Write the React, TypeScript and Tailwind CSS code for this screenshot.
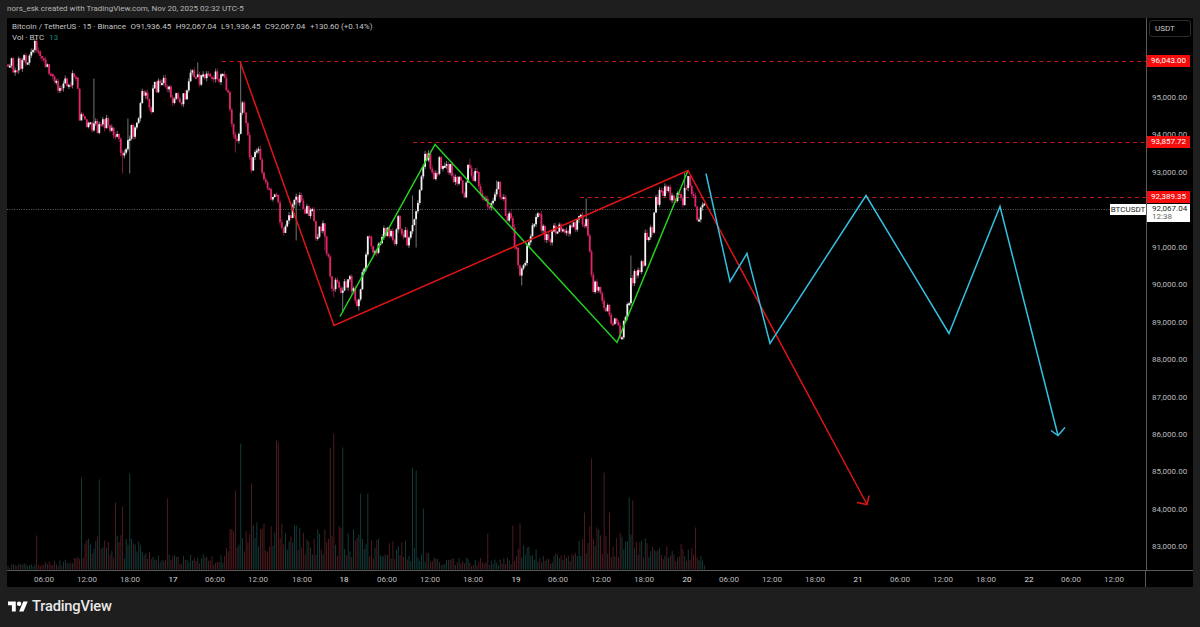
const path: [number, number][] = [
  [7, 64], [15, 66], [22, 62], [30, 58], [36, 42], [45, 58], [50, 77], [63, 87], [70, 78], [78, 83], [80, 120],
  [93, 123], [100, 127], [110, 123], [122, 153], [132, 130], [138, 127], [143, 90], [152, 107], [153, 88],
  [163, 83], [173, 100], [183, 100], [192, 72], [203, 80], [217, 73], [227, 83], [235, 140], [240, 123],
  [242, 93], [252, 167], [257, 147], [263, 180], [277, 200], [282, 233], [293, 210], [298, 198], [305, 213],
  [313, 207], [315, 233], [323, 227], [332, 283], [343, 290], [350, 280], [358, 307], [362, 277], [368, 237],
  [377, 250], [383, 230], [395, 240], [398, 220], [407, 240], [413, 220], [417, 210], [422, 180], [425, 147],
  [433, 173], [440, 163], [447, 163], [457, 180], [465, 190], [467, 167], [477, 177], [483, 200], [490, 203],
  [497, 183], [503, 200], [513, 230], [520, 273], [528, 250], [533, 220], [540, 220], [547, 237], [560, 228],
  [568, 235], [577, 220], [587, 220], [592, 283], [600, 293], [607, 310], [622, 333], [627, 310], [632, 277],
  [637, 267], [643, 267], [645, 237], [652, 230], [655, 203], [663, 190], [670, 193], [677, 195], [683, 202],
  [685, 178], [692, 188], [698, 218], [703, 210],
];

const wicks: [number, number][] = [
  [241, 61], [94, 78], [128, 118], [123, 173], [130, 173], [235, 152], [253, 170], [296, 240], [325, 250],
  [342, 312], [358, 310], [333, 297], [416, 247], [412, 195], [521, 285], [469, 158], [497, 180], [587, 198],
  [631, 255], [685, 172], [700, 222], [37, 36], [197, 62],
];

const volPeaks: [number, number][] = [
  [36, 535], [82, 477], [100, 479], [130, 473], [115, 502], [122, 506], [167, 498], [235, 490], [240, 443],
  [252, 483], [277, 440], [279, 442], [330, 447], [333, 433], [342, 447], [360, 493], [367, 493], [412, 467],
  [417, 470], [423, 508], [487, 533], [512, 525], [520, 523], [592, 458], [604, 472], [585, 512], [630, 497],
  [632, 500], [610, 512], [695, 527],
];

const volEnvelope: [number, number][] = [
  [7, 6], [35, 10], [75, 14], [80, 42], [130, 42], [165, 20], [195, 18], [225, 20], [232, 65], [300, 52],
  [340, 52], [370, 42], [400, 36], [425, 30], [435, 14], [510, 14], [520, 32], [545, 20], [575, 22], [585, 55],
  [640, 42], [660, 28], [690, 32], [704, 12],
];

const priceLabels: [string, number][] = [
  ["95,000.00", 98], ["94,000.00", 135], ["93,000.00", 173], ["91,000.00", 248], ["90,000.00", 285],
  ["89,000.00", 323], ["88,000.00", 360], ["87,000.00", 398], ["86,000.00", 435], ["85,000.00", 472],
  ["84,000.00", 510], ["83,000.00", 547],
];

const redTags: [string, number][] = [["96,043.00", 61], ["93,857.72", 142], ["92,389.35", 197]];

const timeLabels: [string, number, boolean][] = [
  ["06:00", 44, false], ["12:00", 87, false], ["18:00", 130, false], ["17", 173, true], ["06:00", 215, false],
  ["12:00", 258, false], ["18:00", 302, false], ["18", 344, true], ["06:00", 387, false], ["12:00", 430, false],
  ["18:00", 473, false], ["19", 516, true], ["06:00", 558, false], ["12:00", 601, false], ["18:00", 644, false],
  ["20", 687, true], ["06:00", 729, false], ["12:00", 772, false], ["18:00", 815, false], ["21", 858, true],
  ["06:00", 900, false], ["12:00", 943, false], ["18:00", 986, false], ["22", 1029, true], ["06:00", 1071, false],
  ["12:00", 1114, false],
];

function lerp(points: [number, number][], x: number) {
  for (let i = 1; i < points.length; i++) {
    if (x <= points[i][0]) {
      const [x0, y0] = points[i - 1];
      const [x1, y1] = points[i];
      return y0 + ((y1 - y0) * (x - x0)) / (x1 - x0 || 1);
    }
  }
  return points[points.length - 1][1];
}

// small seeded generator so the candles come out the same on each load
let seed = 20251120;
function rnd() {
  seed = (seed * 1664525 + 1013904223) % 4294967296;
  return seed / 4294967296;
}

const STEP = 1.79;
const BASE = 569;

const candles = Array.from({ length: 390 }, (_, i) => 8 + i * STEP).map((x) => ({ x, y: 0, open: 0, high: 0, low: 0 }));
let last = path[0][1];
for (const c of candles) {
  c.open = last;
  c.y = lerp(path, c.x) + (rnd() - 0.5) * 15;
  c.high = Math.min(c.open, c.y) - rnd() * 3.5;
  c.low = Math.max(c.open, c.y) + rnd() * 3.5;
  last = c.y;
}
for (const [x, y] of wicks) {
  const c = candles[Math.round((x - 8) / STEP)];
  if (y < c.high) c.high = y;
  if (y > c.low) c.low = y;
}

const volumes = candles.map((c) => {
  const h = lerp(volEnvelope, c.x) * (0.25 + rnd() * 0.6);
  return { x: c.x, top: BASE - h, up: c.y < c.open };
});
for (const [x, y] of volPeaks) {
  volumes[Math.round((x - 8) / STEP)].top = y;
}

function Chart() {
  return (
    <svg viewBox="7 18 1139 551" className="absolute inset-0 h-full w-full">
      {volumes.map((v) => (
        <rect
          key={v.x}
          x={v.x - 0.4}
          y={v.top}
          width={0.9}
          height={BASE - v.top}
          fill={v.up ? "#15403f" : "#561e22"}
        />
      ))}
      <line x1={7} y1={209} x2={1110} y2={209} stroke="#777" strokeWidth={0.8} strokeDasharray="1 1.4" />
      <line x1={222} y1={61} x2={1146} y2={61} stroke="#c2141d" strokeWidth={1} strokeDasharray="4 3.5" />
      <line x1={413} y1={142} x2={1146} y2={142} stroke="#c2141d" strokeWidth={1} strokeDasharray="4 3.5" />
      <line x1={580} y1={197} x2={1146} y2={197} stroke="#c2141d" strokeWidth={1} strokeDasharray="4 3.5" />
      {candles.map((c) => {
        const up = c.y < c.open;
        const top = Math.min(c.y, c.open);
        const body = Math.max(Math.abs(c.y - c.open), 2);
        return (
          <g key={c.x}>
            <line x1={c.x} y1={c.high} x2={c.x} y2={c.low} stroke={up ? "#a8a8a8" : "#b5245c"} strokeWidth={0.7} />
            <rect x={c.x - 0.9} y={top} width={1.8} height={body} fill={up ? "#f4f4f4" : "#e3246c"} />
          </g>
        );
      })}
      <polyline points="340,316 435,144 617,342 688,170" fill="none" stroke="#22d31f" strokeWidth={1.5} />
      <polyline points="240,61 334,325 688,170 867,504" fill="none" stroke="#e01414" strokeWidth={1.5} />
      <polyline points="857,502 867,504 869,495" fill="none" stroke="#e01414" strokeWidth={1.5} />
      <polyline
        points="706,173 730,281 747,253 770,343 866,195 949,333 1000,206 1058,435"
        fill="none"
        stroke="#35bfe0"
        strokeWidth={1.5}
      />
      <polyline points="1051,430 1058,435 1065,427" fill="none" stroke="#35bfe0" strokeWidth={1.5} />
    </svg>
  );
}

function PriceAxis() {
  return (
    <div className="relative w-[47px] shrink-0 border-l border-[#5a5a5a]">
      <div className="absolute left-[2px] top-[2px] flex h-[17px] w-[42px] items-center rounded-[3px] border border-[#2c2c2c] pl-[5px] text-[8px] text-[#c8c8c8]">
        USDT
      </div>
      {priceLabels.map(([label, y]) => (
        <div key={label} className="absolute left-[5px] -translate-y-1/2 text-[8px] leading-none text-[#bcbcbc]" style={{ top: y - 18 }}>
          {label}
        </div>
      ))}
      {redTags.map(([label, y]) => (
        <div
          key={label}
          className="absolute left-0 flex h-[12px] w-[43px] -translate-y-1/2 items-center justify-center bg-[#f50d0d] text-[8px] leading-none text-white"
          style={{ top: y - 18 }}
        >
          {label}
        </div>
      ))}
      <div className="absolute left-0 top-[186px] h-[18px] w-[43px] bg-white pl-[5px] pt-[1px] text-[8px] leading-[8px] text-[#222]">
        <div>92,067.04</div>
        <div className="text-[#666]">12:38</div>
      </div>
    </div>
  );
}

function TimeAxis() {
  return (
    <div className="relative h-[17px] shrink-0 border-t border-[#5a5a5a]">
      {timeLabels.map(([label, x, day], i) => (
        <span
          key={i}
          className={`absolute top-[4px] -translate-x-1/2 text-[8px] leading-[9px] ${day ? "text-[#e0e0e0]" : "text-[#bcbcbc]"}`}
          style={{ left: x - 7 }}
        >
          {label}
        </span>
      ))}
      <div className="absolute bottom-0 right-[47px] top-0 border-r border-[#5a5a5a]" />
    </div>
  );
}

export default function App() {
  return (
    <div className="flex h-[627px] w-[1200px] flex-col overflow-hidden bg-[#1e1e1e] font-['Roboto',sans-serif]">
      <div className="flex h-[18px] shrink-0 items-center pl-[7px] text-[8px] text-[#b4b4b4]">
        nors_esk created with TradingView.com, Nov 20, 2025 02:32 UTC-5
      </div>

      <div className="mx-[7px] flex h-[569px] shrink-0 flex-col bg-black">
        <div className="flex min-h-0 flex-1">
          <div className="relative flex-1">
            <Chart />
            <div className="absolute left-[5px] top-[4px] flex gap-[4.5px] whitespace-nowrap text-[8px] leading-[10px] text-[#c4c4c4]">
              <span>Bitcoin / TetherUS · 15 · Binance</span>
              <span>O91,936.45</span>
              <span>H92,067.04</span>
              <span>L91,936.45</span>
              <span>C92,067.04</span>
              <span>+130.60 (+0.14%)</span>
            </div>
            <div className="absolute left-[5px] top-[15px] flex gap-[5px] whitespace-nowrap text-[8px] leading-[10px] text-[#c4c4c4]">
              <span>Vol · BTC</span>
              <span className="text-[#1f8a80]">13</span>
            </div>
            <div className="absolute right-0 top-[186px] flex h-[11px] w-[36px] items-center justify-center bg-white text-[8px] leading-none text-[#222]">
              BTCUSDT
            </div>
          </div>
          <PriceAxis />
        </div>
        <TimeAxis />
      </div>

      <div className="flex flex-1 items-center gap-[4px] pb-[1px] pl-[8px]">
        <svg viewBox="0 0 36 28" className="h-[16px] w-[20px] fill-white" aria-hidden="true">
          <path d="M14 22H7V11H0V4h14v18zM28 22h-8l7.5-18h8L28 22z" />
          <circle cx="20" cy="8" r="4" />
        </svg>
        <span className="text-[14.7px] font-medium leading-none tracking-[-0.2px] text-[#e8e8e8]">TradingView</span>
      </div>
    </div>
  );
}
